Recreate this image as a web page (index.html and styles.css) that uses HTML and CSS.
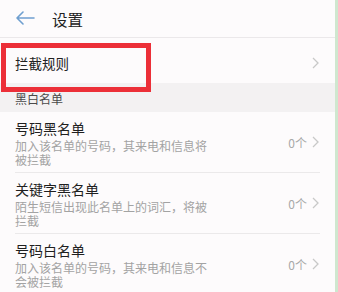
FILE: index.html
```html
<!DOCTYPE html>
<html lang="zh">
<head>
<meta charset="utf-8">
<link rel="stylesheet" href="styles.css">
</head>
<body>
<div class="screen">
  <main class="page">
    <header class="header">
      <svg class="back" width="20" height="14" viewBox="0 0 20 14"><path d="M19 7H2M8 1L2 7l6 6" fill="none" stroke="#6f9fcf" stroke-width="1.6" stroke-linecap="round" stroke-linejoin="round"/></svg>
      <span class="title">设置</span>
    </header>
    <div class="row-rule">
      <span class="rule-text">拦截规则</span>
      <svg class="chev" width="7" height="12" viewBox="0 0 7 12"><path d="M1 1l5 5-5 5" fill="none" stroke="#c8c8c8" stroke-width="1.3"/></svg>
    </div>
    <div class="section">黑白名单</div>
    <div class="item">
      <div class="item-main">
        <div class="item-title">号码黑名单</div>
        <div class="item-sub">加入该名单的号码，其来电和信息将被拦截</div>
      </div>
      <div class="item-right"><span class="count">0个</span><svg class="chev" width="7" height="12" viewBox="0 0 7 12"><path d="M1 1l5 5-5 5" fill="none" stroke="#c8c8c8" stroke-width="1.3"/></svg></div>
    </div>
    <div class="item">
      <div class="item-main">
        <div class="item-title">关键字黑名单</div>
        <div class="item-sub">陌生短信出现此名单上的词汇，将被拦截</div>
      </div>
      <div class="item-right"><span class="count">0个</span><svg class="chev" width="7" height="12" viewBox="0 0 7 12"><path d="M1 1l5 5-5 5" fill="none" stroke="#c8c8c8" stroke-width="1.3"/></svg></div>
    </div>
    <div class="item">
      <div class="item-main">
        <div class="item-title">号码白名单</div>
        <div class="item-sub">加入该名单的号码，其来电和信息不会被拦截</div>
      </div>
      <div class="item-right"><span class="count">0个</span><svg class="chev" width="7" height="12" viewBox="0 0 7 12"><path d="M1 1l5 5-5 5" fill="none" stroke="#c8c8c8" stroke-width="1.3"/></svg></div>
    </div>
    <div class="highlight"></div>
  </main>
  <div class="strip"></div>
</div>
</body>
</html>
```
FILE: styles.css
```css
html, body {
  margin: 0;
  padding: 0;
}
body {
  width: 338px;
  height: 292px;
  overflow: hidden;
  font-family: "Noto Sans CJK SC", "Noto Sans", sans-serif;
  background: #fdfbfc;
}
.screen {
  display: flex;
  height: 292px;
}
.page {
  position: relative;
  width: 335px;
  background: #fdfbfc;
}
.strip {
  width: 3px;
  background: #cfe7cf;
}
.header {
  height: 37px;
  display: flex;
  align-items: center;
  padding-left: 15px;
  border-bottom: 1px solid #ebe8ea;
  box-sizing: content-box;
}
.back {
  margin-top: -2px;
}
.title {
  margin-left: 17px;
  font-size: 15.5px;
  color: #222;
  line-height: 20px;
}
.row-rule {
  height: 45px;
  display: flex;
  align-items: center;
  justify-content: space-between;
  padding: 0 16px 0 15px;
}
.rule-text {
  font-size: 13.5px;
  color: #222;
  margin-top: 4px;
}
.row-rule .chev {
  margin-top: 4px;
}
.section {
  height: 29px;
  background: #f3f1f2;
  padding-left: 15px;
  padding-top: 3px;
  font-size: 12px;
  color: #4a4a4a;
  line-height: 26px;
  box-sizing: border-box;
}
.item {
  height: 61px;
  display: flex;
  align-items: center;
  justify-content: space-between;
  margin: 0 15px;
  padding-right: 1px;
  border-bottom: 1px solid #ebe9ea;
  box-sizing: border-box;
}
.item:last-child {
  border-bottom: none;
}
.item-main {
  align-self: flex-start;
  padding-top: 6px;
}
.item-title {
  font-size: 14px;
  line-height: 20px;
  color: #1f1f1f;
}
.item-sub {
  width: 193px;
  font-size: 12px;
  line-height: 14px;
  color: #a3a3a3;
  margin-top: 1px;
}
.item-right {
  display: flex;
  align-items: center;
  gap: 5px;
}
.count {
  font-size: 12px;
  color: #a8a8a8;
}
.highlight {
  position: absolute;
  left: 1px;
  top: 43px;
  width: 150px;
  height: 49px;
  border: 5px solid #ec2f38;
  box-sizing: border-box;
}
```
